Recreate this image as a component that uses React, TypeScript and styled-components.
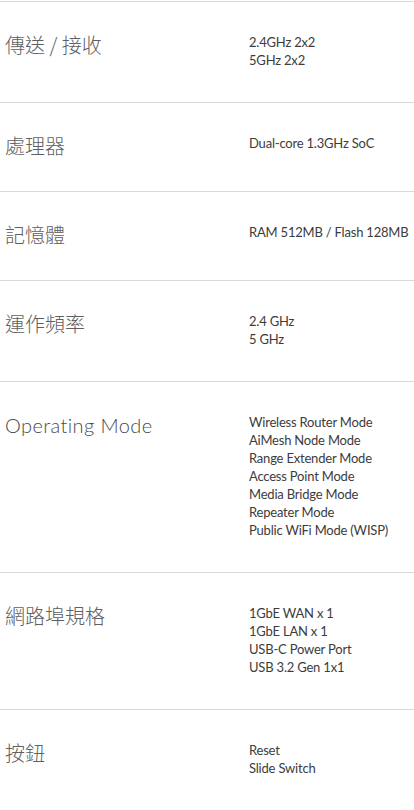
import { createGlobalStyle, styled } from "styled-components";

const GlobalStyle = createGlobalStyle`
  html, body {
    margin: 0;
    padding: 0;
    background: #fff;
  }
  body {
    font-family: "Lato", "Noto Sans CJK TC", sans-serif;
    -webkit-font-smoothing: antialiased;
  }
`;

const SpecList = styled.div`
  width: 414px;
  padding-top: 1px;
`;

const SpecRow = styled.div`
  display: grid;
  grid-template-columns: 244px 1fr;
  align-items: start;
  padding: 31px 0 33px 5px;
  border-top: 1px solid #d8d8d8;
`;

const Label = styled.div<{ $latin?: boolean }>`
  font-family: ${(p) =>
    p.$latin
      ? `"Lato", "Noto Sans", sans-serif`
      : `"Noto Sans CJK TC", "Noto Sans CJK SC", sans-serif`};
  font-size: 20px;
  font-weight: 300;
  letter-spacing: ${(p) => (p.$latin ? "0.4px" : "0")};
  line-height: 24px;
  color: ${(p) => (p.$latin ? "#4a4a4a" : "#606060")};
`;

const Values = styled.div`
  display: flex;
  flex-direction: column;
  font-family: "Lato", "Liberation Sans", sans-serif;
  font-size: 13px;
  letter-spacing: -0.2px;
  line-height: 18px;
  color: #3c3c3c;
`;

type Spec = { label: string; latin?: boolean; values: string[] };

const specs: Spec[] = [
  { label: "傳送 / 接收", values: ["2.4GHz 2x2", "5GHz 2x2"] },
  { label: "處理器", values: ["Dual-core 1.3GHz SoC"] },
  { label: "記憶體", values: ["RAM 512MB / Flash 128MB"] },
  { label: "運作頻率", values: ["2.4 GHz", "5 GHz"] },
  {
    label: "Operating Mode",
    latin: true,
    values: [
      "Wireless Router Mode",
      "AiMesh Node Mode",
      "Range Extender Mode",
      "Access Point Mode",
      "Media Bridge Mode",
      "Repeater Mode",
      "Public WiFi Mode (WISP)",
    ],
  },
  {
    label: "網路埠規格",
    values: ["1GbE WAN x 1", "1GbE LAN x 1", "USB-C Power Port", "USB 3.2 Gen 1x1"],
  },
  { label: "按鈕", values: ["Reset", "Slide Switch"] },
];

export default function App() {
  return (
    <>
      <GlobalStyle />
      <SpecList>
        {specs.map((s) => (
          <SpecRow key={s.label}>
            <Label $latin={s.latin}>{s.label}</Label>
            <Values>
              {s.values.map((v) => (
                <span key={v}>{v}</span>
              ))}
            </Values>
          </SpecRow>
        ))}
      </SpecList>
    </>
  );
}
